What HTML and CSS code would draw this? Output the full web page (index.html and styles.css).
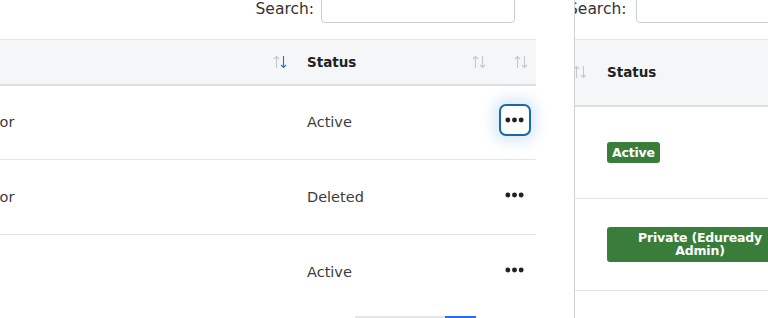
FILE: index.html
```html
<!DOCTYPE html>
<html lang="en">
<head>
    <meta charset="UTF-8">
    <meta name="viewport" content="width=device-width, initial-scale=1.0">
    <title>Users</title>
    <link rel="stylesheet" href="styles.css">
</head>
<body>
<div class="screen">
    <section class="pane pane-main">
        <div class="toolbar">
            <label for="search-main">Search:</label>
            <input type="search" id="search-main">
        </div>

        <table class="data-table main-table">
            <colgroup>
                <col class="col-name">
                <col class="col-role">
                <col class="col-status">
                <col class="col-action">
            </colgroup>
            <thead>
            <tr>
                <th></th>
                <th><div class="th-inner"><span></span>
                    <svg class="sort" viewBox="0 0 14 14"><path class="up" d="M3.5 13V1.5M1 4L3.5 1.5L6 4"/><path class="down active" d="M10.5 1V12.5M8 10L10.5 12.5L13 10"/></svg>
                </div></th>
                <th><div class="th-inner"><span>Status</span>
                    <svg class="sort" viewBox="0 0 14 14"><path class="up" d="M3.5 13V1.5M1 4L3.5 1.5L6 4"/><path class="down" d="M10.5 1V12.5M8 10L10.5 12.5L13 10"/></svg>
                </div></th>
                <th><div class="th-inner end">
                    <svg class="sort" viewBox="0 0 14 14"><path class="up" d="M3.5 13V1.5M1 4L3.5 1.5L6 4"/><path class="down" d="M10.5 1V12.5M8 10L10.5 12.5L13 10"/></svg>
                </div></th>
            </tr>
            </thead>
            <tbody>
            <tr>
                <td></td>
                <td>Instructor</td>
                <td>Active</td>
                <td class="actions"><button class="dots-btn focused" aria-label="Actions"><svg viewBox="0 0 20 6"><circle cx="3" cy="3" r="2.6"/><circle cx="10" cy="3" r="2.6"/><circle cx="17" cy="3" r="2.6"/></svg></button></td>
            </tr>
            <tr>
                <td></td>
                <td>Instructor</td>
                <td>Deleted</td>
                <td class="actions"><button class="dots-btn" aria-label="Actions"><svg viewBox="0 0 20 6"><circle cx="3" cy="3" r="2.6"/><circle cx="10" cy="3" r="2.6"/><circle cx="17" cy="3" r="2.6"/></svg></button></td>
            </tr>
            <tr class="last">
                <td></td>
                <td></td>
                <td>Active</td>
                <td class="actions"><button class="dots-btn" aria-label="Actions"><svg viewBox="0 0 20 6"><circle cx="3" cy="3" r="2.6"/><circle cx="10" cy="3" r="2.6"/><circle cx="17" cy="3" r="2.6"/></svg></button></td>
            </tr>
            </tbody>
        </table>

        <div class="pager">
            <span class="page-btn prev"></span>
            <span class="page-btn current"></span>
            <span class="page-btn next"></span>
        </div>
    </section>

    <section class="pane pane-side">
        <div class="toolbar side-toolbar">
            <label for="search-side">Search:</label>
            <input type="search" id="search-side">
        </div>

        <table class="data-table side-table">
            <colgroup>
                <col class="col-prev">
                <col class="col-badge">
            </colgroup>
            <thead>
            <tr>
                <th><div class="th-inner end">
                    <svg class="sort" viewBox="0 0 14 14"><path class="up" d="M3.5 13V1.5M1 4L3.5 1.5L6 4"/><path class="down" d="M10.5 1V12.5M8 10L10.5 12.5L13 10"/></svg>
                </div></th>
                <th><div class="th-inner"><span>Status</span></div></th>
            </tr>
            </thead>
            <tbody>
            <tr class="tall">
                <td></td>
                <td><span class="badge">Active</span></td>
            </tr>
            <tr class="tall">
                <td></td>
                <td><span class="badge wide">Private (Eduready Admin)</span></td>
            </tr>
            </tbody>
        </table>
    </section>
</div>
</body>
</html>
```

FILE: styles.css
```css
* {
    margin: 0;
    padding: 0;
    box-sizing: border-box;
}

body {
    font-family: 'DejaVu Sans', 'Noto Sans', sans-serif;
    background: white;
    color: #3c3c3c;
    overflow: hidden;
}

.screen {
    display: flex;
    width: 768px;
    height: 318px;
    overflow: hidden;
}

.pane {
    height: 318px;
    overflow: hidden;
}

.pane-main {
    flex: none;
    width: 575px;
    background: white;
    border-right: 1px solid #cfd1d4;
    position: relative;
    z-index: 1;
}

.pane-side {
    flex: 1;
    min-width: 0;
    margin-left: -30px;
}

/* search bar */

.toolbar {
    display: flex;
    justify-content: flex-end;
    align-items: center;
    gap: 7px;
    margin-top: -9px;
    margin-bottom: 16px;
    padding-right: 59px;
    height: 32px;
}

.toolbar label {
    font-size: 15.5px;
    color: #333;
    margin-top: 4px;
}

.toolbar input {
    width: 194px;
    height: 32px;
    border: 1px solid #ccced2;
    border-radius: 4px;
    background: white;
}

.side-toolbar {
    justify-content: flex-start;
    padding-right: 0;
    padding-left: 23px;
    gap: 10px;
}

.side-toolbar input {
    flex: none;
    width: 200px;
}

/* tables */

.data-table {
    border-collapse: collapse;
    table-layout: fixed;
}

.main-table {
    margin-left: -204px;
    width: 740px;
}

.col-name { width: 138px; }
.col-role { width: 363px; }
.col-status { width: 200px; }
.col-action { width: 39px; }

.data-table th {
    height: 45px;
    background: #f5f6f8;
    border-top: 1px solid #e2e4e7;
    border-bottom: 2px solid #dcdee2;
    text-align: left;
    font-size: 13.5px;
    font-weight: 700;
    color: #222;
    padding: 0 10px;
}

.th-inner {
    display: flex;
    justify-content: space-between;
    align-items: center;
}

.th-inner.end {
    justify-content: flex-end;
}

.main-table th:nth-child(3) {
    padding-right: 11px;
}

.main-table th:nth-child(4) {
    padding: 0 8px 0 0;
}

.sort {
    width: 14px;
    height: 14px;
    flex: none;
    fill: none;
    stroke-width: 1.1;
}

.sort path {
    stroke: #c5c8cc;
}

.sort path.active {
    stroke: #1a73e8;
}

.data-table td {
    height: 75px;
    border-bottom: 1px solid #e2e4e7;
    padding: 0 10px;
    font-size: 14.5px;
    white-space: nowrap;
}

.data-table tr.last td {
    border-bottom: none;
}

.actions {
    text-align: center;
}

.data-table td.actions {
    padding: 0 4px 5px 0;
}

.dots-btn {
    width: 32px;
    height: 32px;
    border: 2px solid transparent;
    border-radius: 7px;
    background: white;
    display: inline-flex;
    align-items: center;
    justify-content: center;
    vertical-align: middle;
}

.dots-btn svg {
    width: 19px;
    height: 6px;
    fill: #222;
}

.dots-btn.focused {
    border-color: #1769aa;
    box-shadow: 0 0 14px 5px rgba(74, 152, 214, 0.22);
}

/* pagination strip at the bottom */

.pager {
    display: flex;
    margin-top: 6px;
    margin-left: 355px;
}

.page-btn {
    height: 6px;
}

.page-btn.prev {
    width: 90px;
    background: #e3e5e8;
}

.page-btn.current {
    width: 31px;
    background: #1a73e8;
}

.page-btn.next {
    width: 60px;
}

/* side pane */

.side-table {
    width: 340px;
}

.col-prev { width: 52px; }
.col-badge { width: 288px; }

.side-table th {
    height: 66px;
    font-size: 13.5px;
}

.side-table th:first-child {
    padding-right: 10px;
}

.side-table tr.tall td {
    height: 93px;
}

.side-table tr.tall + tr.tall td {
    height: 92px;
}

.badge {
    display: inline-block;
    background: #3a7d3b;
    color: white;
    font-size: 12.5px;
    font-weight: 700;
    line-height: 13px;
    padding: 4px 5px;
    border-radius: 3px;
    letter-spacing: -0.2px;
}

.badge.wide {
    width: 186px;
    white-space: normal;
    text-align: center;
    line-height: 13.5px;
    padding: 4px 10px;
    margin-top: -1px;
}
```
